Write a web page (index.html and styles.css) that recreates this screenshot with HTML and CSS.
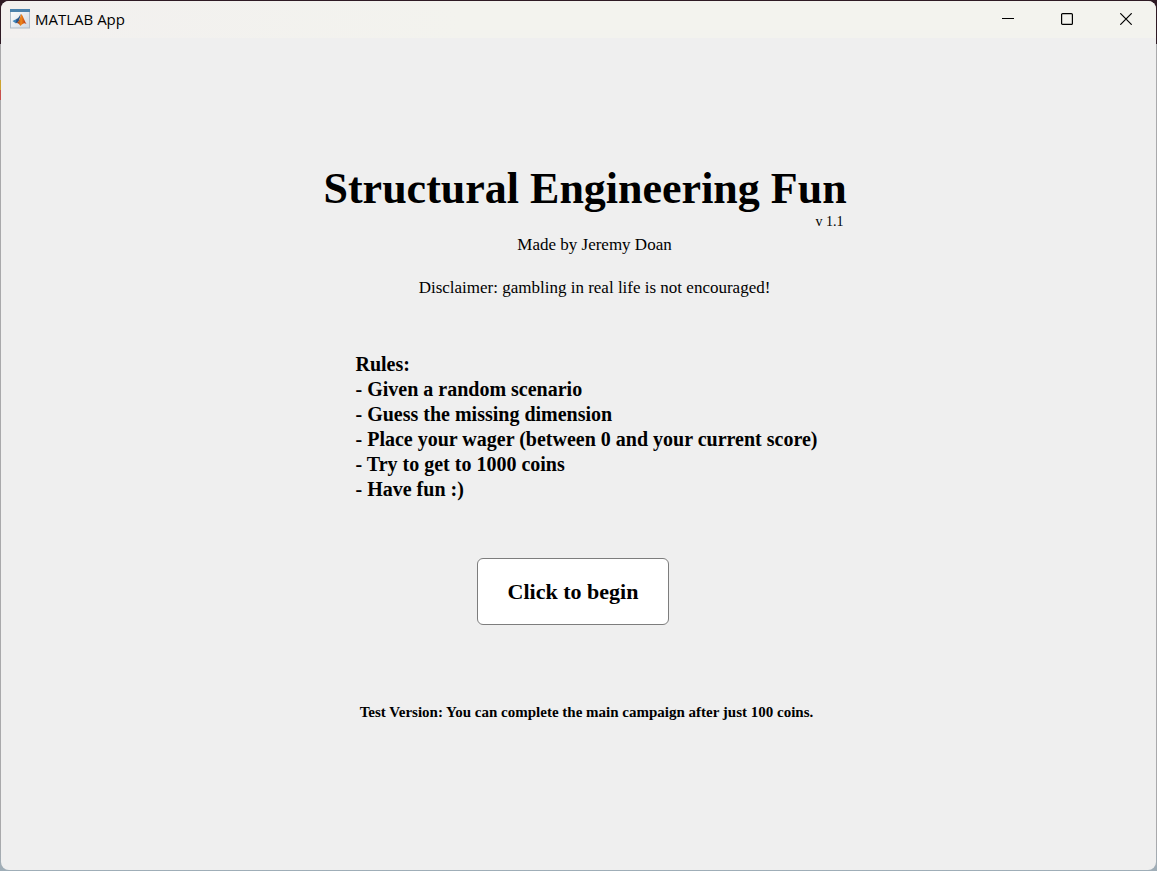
FILE: index.html
```html
<!DOCTYPE html>
<html lang="en">
<head>
<meta charset="utf-8">
<title>MATLAB App</title>
<link rel="stylesheet" href="styles.css">
</head>
<body>
<div class="window">
  <header class="titlebar">
    <svg class="app-icon" viewBox="0 0 20 20" aria-hidden="true">
      <defs>
        <linearGradient id="page" x1="0" y1="0" x2="1" y2="1"><stop offset="0" stop-color="#fff"/><stop offset="1" stop-color="#cfd9e3"/></linearGradient>
        <linearGradient id="flame" x1="0" y1="0" x2="1" y2="0"><stop offset="0" stop-color="#7c1d12"/><stop offset=".45" stop-color="#f08a1c"/><stop offset="1" stop-color="#b52b12"/></linearGradient>
      </defs>
      <rect x=".5" y=".5" width="19" height="18.500" fill="url(#page)" stroke="#aebbc8"/>
      <path d="M0 0h20v3H0z" fill="#4b82ad"/>
      <path d="M2.500 12l4.500-2.200 2 1.700L6 14.500z" fill="#3f83b7"/>
      <path d="M6.500 10c2-.4 3-3.500 4.500-5L9 11.500 7 14l-1-.5z" fill="#27558a"/>
      <path d="M11 5c1.700.5 3 6 5.500 10-2.200-1.300-3.500-.8-6 2-.8-1.500-2-2.800-4-3 2.500-1 3.500-4.500 4.500-9z" fill="url(#flame)"/>
    </svg>
    <span class="app-name">MATLAB App</span>
    <div class="controls">
      <button class="control" aria-label="Minimize"><svg viewBox="0 0 12 12"><path d="M0 5.500h12"/></svg></button>
      <button class="control" aria-label="Maximize"><svg viewBox="0 0 12 12"><rect x=".6" y=".6" width="10.800" height="10.800" rx="1"/></svg></button>
      <button class="control" aria-label="Close"><svg viewBox="0 0 12 12"><path d="M.3.3l11.400 11.400M11.700.3L.3 11.700"/></svg></button>
    </div>
  </header>
  <main class="content">
    <div class="column">
      <h1 class="title">Structural Engineering Fun</h1>
      <p class="version">v 1.1</p>
      <div class="credits">
        <p class="author">Made by Jeremy Doan</p>
        <p class="disclaimer">Disclaimer: gambling in real life is not encouraged!</p>
      </div>
      <section class="rules">
        <h2 class="rules-title">Rules:</h2>
        <ul class="rules-list">
          <li>- Given a random scenario</li>
          <li>- Guess the missing dimension</li>
          <li>- Place your wager (between 0 and your current score)</li>
          <li>- Try to get to 1000 coins</li>
          <li>- Have fun :)</li>
        </ul>
      </section>
      <div class="action"><button class="begin">Click to begin</button></div>
      <p class="note">Test Version: You can complete the main campaign after just 100 coins.</p>
    </div>
  </main>
</div>
</body>
</html>
```
FILE: styles.css
```css
* { box-sizing: border-box; }
body {
  margin: 0;
  min-height: 100vh;
  display: flex;
  background:
    linear-gradient(transparent 80px, #cda32f 80px 90px, #c7504c 90px 100px, transparent 100px) left / 1px 100% no-repeat,
    linear-gradient(#2e1a24 0 44px, #a9a9ab 44px 840px, #9faeb8);
  color: #000;
  font-family: "Liberation Serif", serif;
}
h1, h2, p, ul { margin: 0; padding: 0; }
.window {
  flex: 1;
  display: flex;
  flex-direction: column;
  margin: 1px;
  border-radius: 8px;
  overflow: hidden;
  background: #efefef;
}
.titlebar {
  display: flex;
  align-items: center;
  height: 37px;
  padding: 0 1px 2px 9px;
  background: linear-gradient(90deg, #f2f0ef, #f3f3ee 40%);
}
.app-icon { width: 20px; height: 20px; }
.app-name {
  margin-left: 5px;
  font: 15px/20px "Open Sans", "Noto Sans", sans-serif;
}
.controls { display: flex; margin-left: auto; height: 100%; }
.control {
  display: grid;
  place-items: center;
  width: 59px;
  padding: 0;
  border: 0;
  background: none;
}
.control svg {
  width: 12px;
  height: 12px;
  fill: none;
  stroke: #000;
  stroke-width: 1.2;
}
.content {
  display: flex;
  justify-content: center;
  padding: 126px 0 40px 16px;
}
.column { width: 526px; }
.title { font-size: 44px; line-height: 50px; white-space: nowrap; }
.version { padding-right: 6px; font-size: 14px; line-height: 16px; text-align: right; }
.credits {
  padding-left: 16px;
  font-size: 17px;
  line-height: 20px;
  text-align: center;
}
.author { margin-top: 5px; }
.disclaimer { margin-top: 23px; }
.rules {
  margin-top: 54px;
  padding-left: 32px;
  font-size: 20px;
  font-weight: bold;
  line-height: 25px;
  white-space: nowrap;
}
.rules-title { font-size: inherit; }
.rules-list { list-style: none; }
.action { display: flex; justify-content: center; margin-top: 56px; padding-right: 27px; }
.begin {
  width: 192px;
  height: 67px;
  border: 1px solid #7d7d7d;
  border-radius: 6px;
  background: #fff;
  color: inherit;
  font: bold 22px/26px "Liberation Serif", serif;
}
.note {
  margin-top: 77px;
  font-size: 15px;
  font-weight: bold;
  line-height: 20px;
  text-align: center;
}
```
